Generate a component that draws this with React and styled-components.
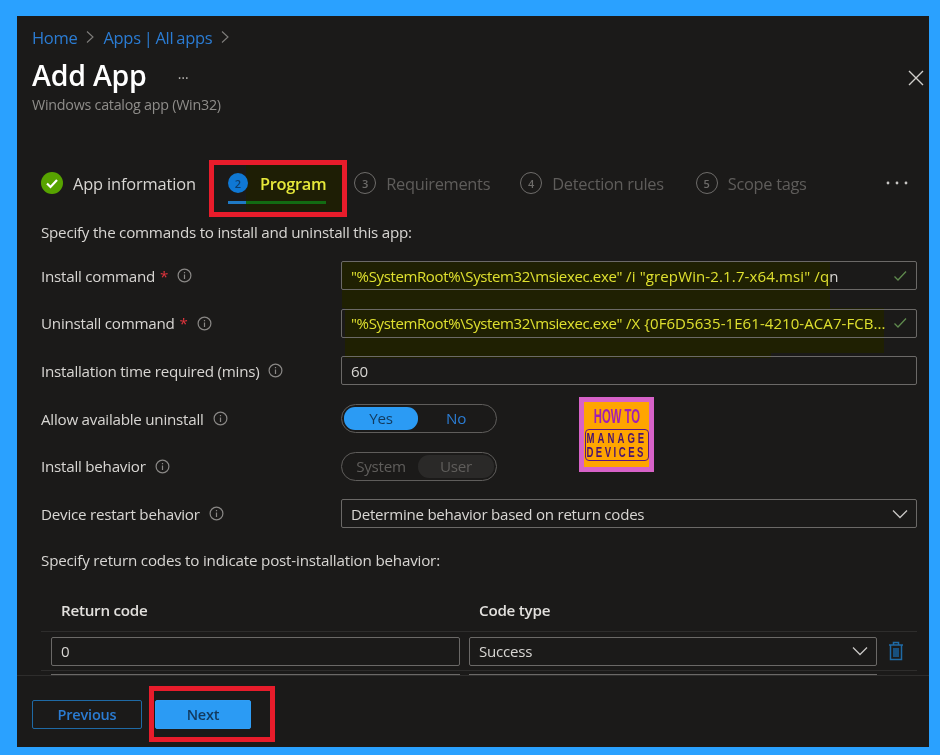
import React from "react";
import styled, { createGlobalStyle } from "styled-components";

const Global = createGlobalStyle`
  html, body { margin: 0; padding: 0; background: #2aa1ff; }
  body { font-family: "Open Sans", "Noto Sans", "Liberation Sans", sans-serif; }
  * { box-sizing: border-box; }
`;

const Page = styled.div`
  width: 940px;
  height: 755px;
  padding: 16px 11px 8px 17px;
  background: #2aa1ff;
  overflow: hidden;
  filter: blur(0.35px);
`;

const Panel = styled.main`
  position: relative;
  width: 912px;
  height: 731px;
  background: #1b1a19;
  display: flex;
  flex-direction: column;
  font-size: 15.2px;
  letter-spacing: -0.25px;
  color: #d8d6d3;
`;

const Header = styled.header`
  padding: 11px 15px 0;
  height: 150px;
  flex: none;
`;

const Breadcrumb = styled.nav`
  display: flex;
  align-items: center;
  gap: 9px;
  height: 20px;
  font-size: 16.5px;
  color: #2b7cd3;
  letter-spacing: -0.3px;
  word-spacing: -1px;
`;

const TitleRow = styled.div`
  display: flex;
  align-items: center;
  margin-top: 10px;
  height: 36px;
`;

const Title = styled.h1`
  margin: 0;
  font-size: 28.5px;
  font-weight: 600;
  color: #ffffff;
  letter-spacing: -0.2px;
`;

const TitleMore = styled.span`
  margin-left: 31px;
  color: #b5b3b0;
  font-size: 14px;
  letter-spacing: 2px;
  position: relative;
  top: -2px;
`;

const Subtitle = styled.div`
  font-size: 14.3px;
  color: #8f8d8a;
  letter-spacing: -0.25px;
  margin-top: 2px;
`;

const Close = styled.svg`
  position: absolute;
  right: 5px;
  top: 54px;
  width: 16px;
  height: 16px;
`;

const Steps = styled.div`
  display: flex;
  align-items: center;
  height: 34px;
  padding-left: 24px;
  flex: none;
  position: relative;
`;

const Step = styled.div`
  display: flex;
  align-items: center;
  gap: ${(p) => p.$gap || 10}px;
  margin-right: ${(p) => p.$mr || 0}px;
  font-size: 16.4px;
  letter-spacing: ${(p) => p.$track ?? -0.3}px;
  color: ${(p) => p.$color || "#5f5d5b"};
  font-weight: ${(p) => p.$weight || 400};
  white-space: nowrap;
`;

const StepNum = styled.span`
  width: 22px;
  height: 22px;
  border-radius: 50%;
  border: 1.5px solid #6e6c6a;
  display: flex;
  align-items: center;
  justify-content: center;
  font-size: 11px;
  font-weight: 600;
  color: #6e6c6a;
  letter-spacing: 0;
`;

const CurrentNum = styled(StepNum)`
  width: 20px;
  height: 20px;
  border: none;
  background: #0f78d4;
  color: #0d3e6d;
`;

const Underline = styled.div`
  position: absolute;
  left: 211px;
  top: 35px;
  width: 98px;
  height: 3px;
  background: linear-gradient(90deg, #1f79c4 0 18px, #126b12 18px);
  z-index: 1;
`;

const TabGlow = styled.div`
  position: absolute;
  left: 229px;
  top: -1px;
  width: 96px;
  height: 46px;
  background: #1e1e05;
  z-index: 0;
`;

const TabContent = styled.div`
  position: relative;
  z-index: 1;
  display: flex;
  align-items: center;
`;

const DotsIcon = styled.svg`
  margin-left: 78px;
  width: 24px;
  height: 6px;
`;

const RedBox = styled.div`
  position: absolute;
  border: 5px solid #e81c2b;
  left: ${(p) => p.$x}px;
  top: ${(p) => p.$y}px;
  width: ${(p) => p.$w}px;
  height: ${(p) => p.$h}px;
  pointer-events: none;
  z-index: 5;
`;

const Body = styled.div`
  flex: 1;
  overflow: hidden;
  padding: 17px 12px 0 24px;
  position: relative;
`;

const Intro = styled.p`
  margin: 0 0 1px;
  height: 34px;
  padding-top: 5px;
  line-height: 20px;
`;

const Glow = styled.div`
  position: absolute;
  left: ${(p) => p.$x}px;
  top: ${(p) => p.$y}px;
  width: ${(p) => p.$w}px;
  height: ${(p) => p.$h}px;
  background: #1f2002;
`;

const FormRow = styled.div`
  position: relative;
  display: grid;
  grid-template-columns: 300px 1fr;
  align-items: center;
  height: 47.6px;
`;

const LabelWrap = styled.label`
  display: flex;
  align-items: center;
  gap: 9px;
  white-space: nowrap;
`;

const Req = styled.span`
  color: #e0343d;
  margin-left: -4px;
`;

const InfoIcon = styled.svg`
  width: 15px;
  height: 15px;
  flex: none;
`;

const Field = styled.div`
  height: 29px;
  border: 1.5px solid #6b6967;
  border-radius: 2px;
  padding: 0 8px 0 9px;
  display: flex;
  align-items: center;
  justify-content: space-between;
  font-size: 15.1px;
  letter-spacing: -0.25px;
  color: #d8d6d3;
  white-space: nowrap;
  overflow: hidden;
  position: relative;
`;

const CommandField = styled(Field)`
  font-size: 15px;
  color: #dfe02f;
`;

const CommandPath = styled.span`
  letter-spacing: -0.37px;
`;

const CommandArgs = styled.span`
  letter-spacing: ${(p) => p.$track}px;
`;

const Tail = styled.span`
  color: #d8d6d3;
`;

const Toggle = styled.div`
  width: 156px;
  height: 29px;
  border-radius: 15px;
  border: 1.5px solid #5f5d5b;
  padding: 2px;
  display: grid;
  grid-template-columns: 74px 1fr;
  text-align: center;
  line-height: 22px;
  color: ${(p) => p.$color};
`;

const ToggleItem = styled.span`
  border-radius: 11px;
  background: ${(p) => p.$bg || "transparent"};
  color: ${(p) => p.$color || "inherit"};
`;

const Logo = styled.div`
  position: absolute;
  left: 579px;
  top: 397px;
  width: 75px;
  height: 75px;
  background: #ffa500;
  border: 5px solid #d762c8;
  display: flex;
  flex-direction: column;
  align-items: center;
  font-family: "Liberation Sans", sans-serif;
  font-weight: 700;
  letter-spacing: 0;
  z-index: 3;
`;

const LogoTop = styled.div`
  font-size: 19.5px;
  line-height: 18px;
  margin-top: 5px;
  color: #a01fb5;
  white-space: nowrap;
  transform: scaleX(0.58);
`;

const LogoBox = styled.div`
  margin-top: 4px;
  width: 64px;
  height: 32px;
  flex: none;
  border: 1.5px solid #5c1580;
  border-radius: 4px;
  display: flex;
  flex-direction: column;
  align-items: center;
  padding-top: 2px;
`;

const LogoLine = styled.div`
  font-size: 12px;
  line-height: 13.5px;
  color: #4a1270;
  white-space: nowrap;
  letter-spacing: ${(p) => p.$ls}px;
  transform: scale(0.8, 1.22);
`;

const Section = styled.p`
  margin: 0;
  height: 42px;
  padding-top: 12px;
  line-height: 20px;
  letter-spacing: -0.2px;
`;

const TableHead = styled.div`
  display: grid;
  grid-template-columns: 418px 1fr;
  padding: 0 0 11px 20px;
  height: 50px;
  align-items: end;
  border-bottom: 1px solid #2e2d2c;
  font-weight: 600;
  color: #e2e0dd;
  margin-top: 2px;
`;

const TableRow = styled.div`
  display: grid;
  grid-template-columns: 409px 408px 20px;
  column-gap: 9px;
  align-items: center;
  padding: 5px 0 4px 10px;
  border-bottom: 1px solid #2e2d2c;
`;

const Trash = styled.svg`
  margin-left: 2px;
  width: 16px;
  height: 20px;
`;

const Cut = styled.div`
  height: 4px;
  margin-top: 3px;
  display: grid;
  grid-template-columns: 409px 408px;
  column-gap: 9px;
  padding-left: 10px;
`;

const CutEdge = styled.div`
  height: 2px;
  background: #6b6967;
`;

const Footer = styled.footer`
  height: 72px;
  flex: none;
  border-top: 1px solid #2e2d2c;
  display: flex;
  align-items: center;
  gap: 13px;
  padding: 6px 15px 0;
  position: relative;
`;

const Button = styled.button`
  width: ${(p) => p.$w}px;
  height: 29px;
  border-radius: 2px;
  border: 1.5px solid ${(p) => (p.$primary ? "#2f9df5" : "#1f6aa5")};
  background: ${(p) => (p.$primary ? "#2b9bf4" : "transparent")};
  color: ${(p) => (p.$primary ? "#123a5e" : "#2b7cd3")};
  font: 600 14.5px "Open Sans", sans-serif;
  letter-spacing: -0.2px;
`;

const Info = () => (
  <InfoIcon viewBox="0 0 15 15" fill="none" stroke="#8a8886" strokeWidth="1.2">
    <circle cx="7.5" cy="7.5" r="6.4" />
    <path d="M7.5 6.6V11M7.5 4v1.2" />
  </InfoIcon>
);

const Check = () => (
  <svg width="16" height="16" viewBox="0 0 16 16" fill="none" stroke="#5f8a4d" strokeWidth="1.3">
    <path d="M2.5 8.5 6 12 14 3.5" />
  </svg>
);

const Chevron = () => (
  <svg width="16" height="10" viewBox="0 0 16 10" fill="none" stroke="#c8c6c4" strokeWidth="1.3">
    <path d="M1 1.5 8 8.5 15 1.5" />
  </svg>
);

const Chev = () => (
  <svg width="8" height="14" viewBox="0 0 8 14" fill="none" stroke="#7f7d7b" strokeWidth="1.1">
    <path d="M1 1.5 7 7 1 12.5" />
  </svg>
);

const Num = ({ n }) => <StepNum>{n}</StepNum>;

export default function App() {
  return (
    <Page>
      <Global />
      <Panel>
        <Header>
          <Breadcrumb>
            <span>Home</span>
            <Chev />
            <span>Apps | All apps</span>
            <Chev />
          </Breadcrumb>
          <TitleRow>
            <Title>Add App</Title>
            <TitleMore>…</TitleMore>
          </TitleRow>
          <Subtitle>Windows catalog app (Win32)</Subtitle>
          <Close viewBox="0 0 16 16" fill="none" stroke="#d0cecb" strokeWidth="1.4">
            <path d="M1 1 15 15M15 1 1 15" />
          </Close>
        </Header>

        <Steps>
          <Step $color="#d8d6d3" $mr={32} $track={-0.15}>
            <svg width="22" height="22" viewBox="0 0 22 22">
              <circle cx="11" cy="11" r="11" fill="#57a300" />
              <path d="M6 11.5 9.5 15 16 8" fill="none" stroke="#fff" strokeWidth="2.2" />
            </svg>
            App information
          </Step>
          <TabGlow />
          <Underline />
          <TabContent>
            <Step $color="#e6e83a" $weight={600} $gap={12} $mr={28}>
              <CurrentNum>2</CurrentNum>
              Program
            </Step>
          </TabContent>
          <Step $mr={30}><Num n="3" />Requirements</Step>
          <Step $mr={32}><Num n="4" />Detection rules</Step>
          <Step><Num n="5" />Scope tags</Step>
          <DotsIcon viewBox="0 0 24 6" fill="#c8c6c4">
            <circle cx="3" cy="3" r="1.4" /><circle cx="12" cy="3" r="1.4" /><circle cx="21" cy="3" r="1.4" />
          </DotsIcon>
        </Steps>
        <RedBox $x={192} $y={144} $w={138} $h={57} />

        <Body>
          <Glow $x={325} $y={61} $w={488} $h={47} />
          <Glow $x={328} $y={108} $w={539} $h={45} />
          <Glow $x={328} $y={153} $w={426} $h={5} />
          <Intro>Specify the commands to install and uninstall this app:</Intro>
          <FormRow>
            <LabelWrap>Install command <Req>*</Req><Info /></LabelWrap>
            <CommandField>
              <span>
                <CommandPath>"%SystemRoot%\System32\msiexec.exe"</CommandPath>
                <CommandArgs $track={0.13}> /i "grepWin-2.1.7-x64.msi" /q<Tail>n</Tail></CommandArgs>
              </span>
              <Check />
            </CommandField>
          </FormRow>
          <FormRow>
            <LabelWrap>Uninstall command <Req>*</Req><Info /></LabelWrap>
            <CommandField>
              <span>
                <CommandPath>"%SystemRoot%\System32\msiexec.exe"</CommandPath>
                <CommandArgs $track={0.07}> /X {"{"}0F6D5635-1E61-4210-ACA7-FCB...</CommandArgs>
              </span>
              <Check />
            </CommandField>
          </FormRow>
          <FormRow>
            <LabelWrap>Installation time required (mins) <Info /></LabelWrap>
            <Field>60</Field>
          </FormRow>
          <FormRow>
            <LabelWrap>Allow available uninstall <Info /></LabelWrap>
            <Toggle $color="#2b7cd3">
              <ToggleItem $bg="#2b9bf4" $color="#123a5e">Yes</ToggleItem>
              <ToggleItem>No</ToggleItem>
            </Toggle>
          </FormRow>
          <FormRow>
            <LabelWrap>Install behavior <Info /></LabelWrap>
            <Toggle $color="#5f5d5b">
              <ToggleItem>System</ToggleItem>
              <ToggleItem $bg="#2a2928">User</ToggleItem>
            </Toggle>
          </FormRow>
          <FormRow>
            <LabelWrap>Device restart behavior <Info /></LabelWrap>
            <Field>
              <span>Determine behavior based on return codes</span>
              <Chevron />
            </Field>
          </FormRow>
          <Section>Specify return codes to indicate post-installation behavior:</Section>
          <TableHead>
            <span>Return code</span>
            <span>Code type</span>
          </TableHead>
          <TableRow>
            <Field>0</Field>
            <Field>
              <span>Success</span>
              <Chevron />
            </Field>
            <Trash viewBox="0 0 16 20" fill="none" stroke="#1f6aa5" strokeWidth="1.5">
              <path d="M1 4h14M5.5 4V1.5h5V4M2.5 4v14.5h11V4" />
              <path d="M5 7h6v9H5z" fill="#174f7d" stroke="none" />
            </Trash>
          </TableRow>
          <Cut><CutEdge /><CutEdge /></Cut>
        </Body>

        <Footer>
          <Button $w={110}>Previous</Button>
          <Button $primary $w={96}>Next</Button>
        </Footer>
        <RedBox $x={132} $y={670} $w={126} $h={56} />
      </Panel>
      <Logo>
        <LogoTop>HOW TO</LogoTop>
        <LogoBox>
          <LogoLine $ls={3.75}>MANAGE</LogoLine>
          <LogoLine $ls={3.1}>DEVICES</LogoLine>
        </LogoBox>
      </Logo>
    </Page>
  );
}
